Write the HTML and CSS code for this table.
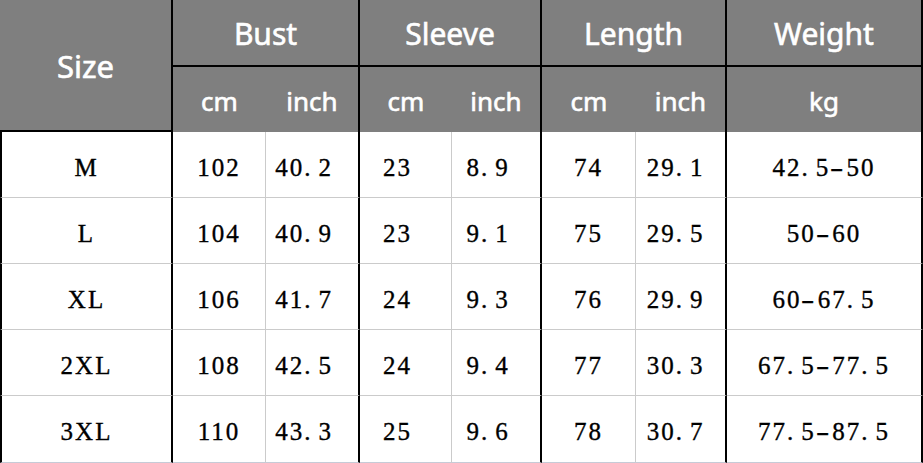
FILE: index.html
```html
<!DOCTYPE html>
<html lang="en">
<head>
<meta charset="utf-8">
<title>Size chart</title>
<link rel="stylesheet" href="styles.css">
</head>
<body>
<div class="chart">
  <div class="h size-h">Size</div>
  <div class="h grp span2">Bust</div>
  <div class="h grp span2">Sleeve</div>
  <div class="h grp span2">Length</div>
  <div class="h grp">Weight</div>

  <div class="h sub">cm</div>
  <div class="h sub end">inch</div>
  <div class="h sub">cm</div>
  <div class="h sub end">inch</div>
  <div class="h sub">cm</div>
  <div class="h sub end">inch</div>
  <div class="h sub end">kg</div>

  <div class="c sz">M</div>
  <div class="c cm">102</div>
  <div class="c in pr">40<span class="pt">.</span>2</div>
  <div class="c cm pr">23</div>
  <div class="c in pr">8<span class="pt">.</span>9</div>
  <div class="c cm">74</div>
  <div class="c in pr2">29<span class="pt">.</span>1</div>
  <div class="c wt">42<span class="pt">.</span>5<span class="dash">-</span>50</div>

  <div class="c sz">L</div>
  <div class="c cm">104</div>
  <div class="c in pr">40<span class="pt">.</span>9</div>
  <div class="c cm pr">23</div>
  <div class="c in pr">9<span class="pt">.</span>1</div>
  <div class="c cm">75</div>
  <div class="c in pr2">29<span class="pt">.</span>5</div>
  <div class="c wt">50<span class="dash">-</span>60</div>

  <div class="c sz">XL</div>
  <div class="c cm">106</div>
  <div class="c in pr">41<span class="pt">.</span>7</div>
  <div class="c cm pr">24</div>
  <div class="c in pr">9<span class="pt">.</span>3</div>
  <div class="c cm">76</div>
  <div class="c in pr2">29<span class="pt">.</span>9</div>
  <div class="c wt">60<span class="dash">-</span>67<span class="pt">.</span>5</div>

  <div class="c sz">2XL</div>
  <div class="c cm">108</div>
  <div class="c in pr">42<span class="pt">.</span>5</div>
  <div class="c cm pr">24</div>
  <div class="c in pr">9<span class="pt">.</span>4</div>
  <div class="c cm">77</div>
  <div class="c in pr2">30<span class="pt">.</span>3</div>
  <div class="c wt">67<span class="pt">.</span>5<span class="dash">-</span>77<span class="pt">.</span>5</div>

  <div class="c sz last">3XL</div>
  <div class="c cm last">110</div>
  <div class="c in pr last">43<span class="pt">.</span>3</div>
  <div class="c cm pr last">25</div>
  <div class="c in pr last">9<span class="pt">.</span>6</div>
  <div class="c cm last">78</div>
  <div class="c in pr2 last">30<span class="pt">.</span>7</div>
  <div class="c wt last">77<span class="pt">.</span>5<span class="dash">-</span>87<span class="pt">.</span>5</div>
</div>
</body>
</html>
```
FILE: styles.css
```css
* { box-sizing: border-box; }
html, body { margin: 0; padding: 0; background: #fff; }
.chart {
  width: 923px;
  height: 463px;
  display: grid;
  grid-template-columns: 173px 93px 94px 92px 90px 94px 91px 196px;
  grid-template-rows: 67px 65px 66px 66px 66px 66px 67px;
}
.h {
  background: #7f7f7f;
  color: #fff;
  font-family: "Noto Sans", "Open Sans", sans-serif;
  -webkit-text-stroke: 0.6px #fff;
  display: flex;
  align-items: center;
  justify-content: center;
  line-height: 1;
}
.size-h {
  grid-row: span 2;
  font-size: 31px;
  border-right: 2px solid #000;
  border-bottom: 2px solid #000;
  padding-top: 3px;
}
.grp {
  font-size: 30px;
  border-right: 2px solid #000;
  border-bottom: 2px solid #000;
  padding-top: 2px;
}
.span2 { grid-column: span 2; }
.sub { font-size: 26px; padding-top: 2px; }
.sub.end { border-right: 2px solid #000; }

.c {
  font-family: "Liberation Serif", "Times New Roman", serif;
  font-size: 25px;
  letter-spacing: 2px;
  color: #000;
  -webkit-text-stroke: 0.35px #000;
  display: flex;
  align-items: center;
  justify-content: center;
  padding-top: 5px;
  line-height: 1;
  border-bottom: 1px solid #cbcbcb;
}
.c.last { border-bottom-color: #c6cbd7; }
.sz { border-left: 2px solid #000; border-right: 2px solid #000; }
.cm { border-right: 1px solid #cbcbcb; }
.in, .wt { border-right: 2px solid #000; }
.pr { padding-right: 16px; }
.pr2 { padding-right: 10px; }
.pt { padding-right: 6px; }
.dash { display: inline-block; transform: scaleX(1.6); margin: 0 3px; }
```
